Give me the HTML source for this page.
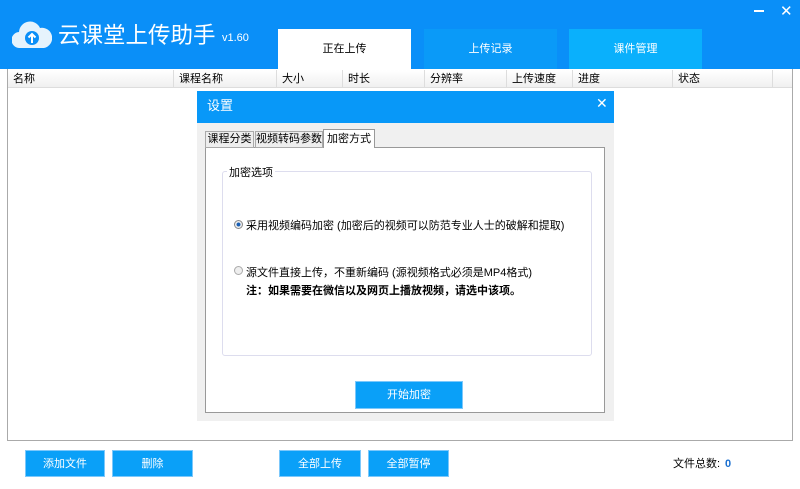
<!DOCTYPE html>
<html><head><meta charset="utf-8"><style>
*{margin:0;padding:0;box-sizing:border-box}
body{width:800px;height:489px;background:#fff;position:relative;overflow:hidden;font-family:"Liberation Sans","Noto Sans CJK SC",sans-serif;font-size:11px;color:#000}
.abs{position:absolute}
.hdr{left:0;top:0;width:800px;height:69px;background:#0a8ff8}
.tab{top:29px;height:40px;width:133px;text-align:center;line-height:40px;color:#fff;font-size:11px}
.btn{background:#0aa0f8;color:#fff;text-align:center;line-height:26px;font-size:11px;border:1px solid #7cc8fb}
.col{top:70px;height:18px;line-height:18px;border-right:1px solid #ddd;padding-left:5px}
</style></head><body>
<div class="abs hdr"></div>
<svg class="abs" style="left:12px;top:20px" width="40" height="30" viewBox="0 0 40 30"><path d="M8 28 A8 8 0 0 1 7 12 A11 11 0 0 1 28 8 A9 9 0 0 1 32 28 Z" fill="#e6f3fc"/><circle cx="20" cy="18" r="7" fill="#0a8ff8"/><path d="M20 23 V14 M16.5 17.5 L20 14 L23.5 17.5" stroke="#fff" stroke-width="2" fill="none"/></svg>
<div class="abs" style="left:58px;top:22px;color:#fff;font-size:22.5px;line-height:28px">云课堂上传助手</div>
<div class="abs" style="left:222px;top:32px;color:#fff;font-size:11px">v1.60</div>
<div class="abs" style="left:754px;top:10px;width:10px;height:1.5px;background:#fff"></div>
<div class="abs" style="left:780px;top:2px;color:#fff;font-size:15px">✕</div>
<div class="abs tab" style="left:278px;background:#fff;color:#000">正在上传</div>
<div class="abs tab" style="left:424px;background:#0a9af8">上传记录</div>
<div class="abs tab" style="left:569px;background:#0ab0fc">课件管理</div>
<div class="abs" style="left:7px;top:69px;width:786px;height:372px;border:1px solid #aaa;border-top:none"></div>
<div class="abs" style="left:8px;top:70px;width:784px;height:18px;background:linear-gradient(#fff,#f0f0f0);border-bottom:1px solid #ddd"></div>
<div class="abs col" style="left:8px;width:166px">名称</div>
<div class="abs col" style="left:174px;width:103px">课程名称</div>
<div class="abs col" style="left:277px;width:66px">大小</div>
<div class="abs col" style="left:343px;width:82px">时长</div>
<div class="abs col" style="left:425px;width:82px">分辨率</div>
<div class="abs col" style="left:507px;width:66px">上传速度</div>
<div class="abs col" style="left:573px;width:100px">进度</div>
<div class="abs col" style="left:673px;width:100px">状态</div>
<div class="abs" style="left:197px;top:91px;width:417px;height:330px;background:#f0f0f0"></div>
<div class="abs" style="left:197px;top:91px;width:417px;height:32px;background:#0898f8;color:#fff;font-size:13px;line-height:30px;padding-left:10px">设置</div>
<div class="abs" style="left:596px;top:95px;color:#fff;font-size:14px">✕</div>
<div class="abs" style="left:205px;top:147px;width:400px;height:266px;background:#fff;border:1px solid #999"></div>
<div class="abs" style="left:205px;top:131px;width:49px;height:17px;border:1px solid #aaa;background:#eee;text-align:center;line-height:15px">课程分类</div>
<div class="abs" style="left:255px;top:131px;width:68px;height:17px;border:1px solid #aaa;background:#eee;text-align:center;line-height:15px">视频转码参数</div>
<div class="abs" style="left:323px;top:129px;width:52px;height:19px;border:1px solid #999;border-bottom:none;background:#fff;text-align:center;line-height:18px">加密方式</div>
<div class="abs" style="left:222px;top:171px;width:370px;height:185px;border:1px solid #dde;border-radius:3px"></div>
<div class="abs" style="left:227px;top:164px;background:#fff;padding:0 2px">加密选项</div>
<div class="abs" style="left:234px;top:220px;width:9px;height:9px;border-radius:50%;border:1px solid #888;background:radial-gradient(#1a5fb4 35%,#eee 45%)"></div>
<div class="abs" style="left:246px;top:217px">采用视频编码加密 (加密后的视频可以防范专业人士的破解和提取)</div>
<div class="abs" style="left:234px;top:266px;width:9px;height:9px;border-radius:50%;border:1px solid #aaa;background:#eee"></div>
<div class="abs" style="left:246px;top:264px">源文件直接上传，不重新编码 (源视频格式必须是MP4格式)</div>
<div class="abs" style="left:246px;top:282px;font-weight:bold">注：如果需要在微信以及网页上播放视频，请选中该项。</div>
<div class="abs btn" style="left:355px;top:381px;width:108px;height:28px;line-height:26px">开始加密</div>
<div class="abs btn" style="left:25px;top:450px;width:80px;height:27px">添加文件</div>
<div class="abs btn" style="left:112px;top:450px;width:81px;height:27px">删除</div>
<div class="abs btn" style="left:279px;top:450px;width:82px;height:27px">全部上传</div>
<div class="abs btn" style="left:368px;top:450px;width:81px;height:27px">全部暂停</div>
<div class="abs" style="left:673px;top:457px;line-height:14px">文件总数:</div>
<div class="abs" style="left:725px;top:457px;line-height:14px;color:#1a6fd0;font-weight:bold">0</div>
</body></html>
